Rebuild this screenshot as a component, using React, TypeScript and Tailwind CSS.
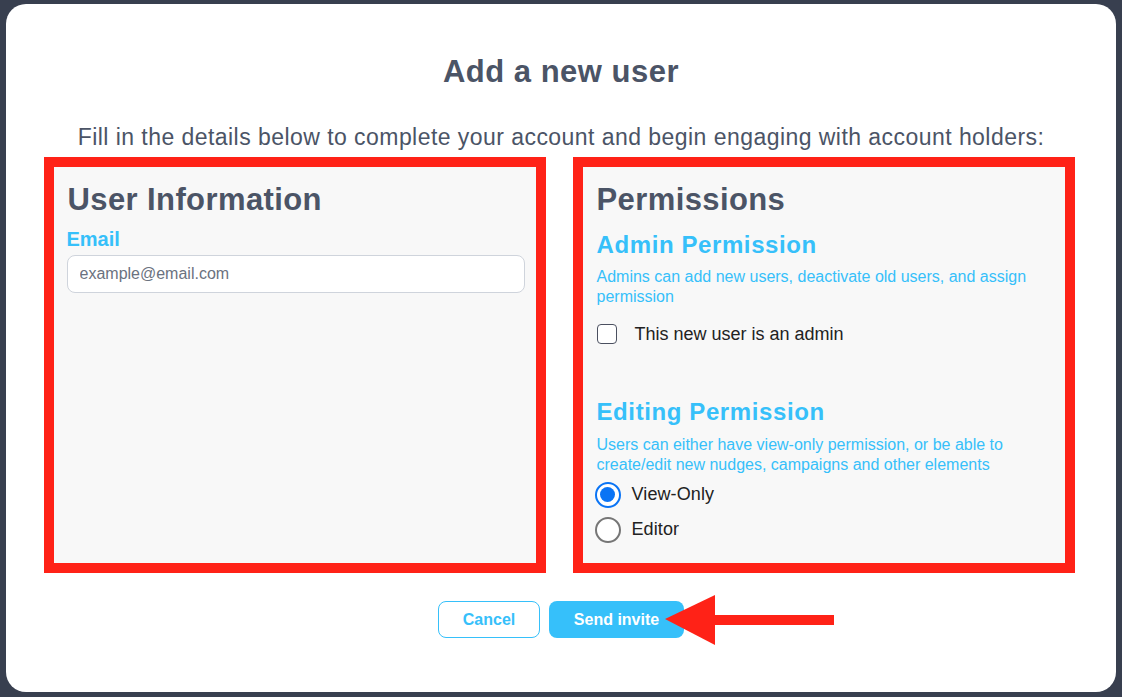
import { useState } from 'react'

const font = { fontFamily: '"Liberation Sans", Arial, sans-serif' }

function Radio({ checked, label, onChange }: { checked: boolean; label: string; onChange: () => void }) {
  return (
    <label className="flex h-[35px] items-center cursor-pointer" onClick={onChange}>
      <span
        className={
          checked
            ? 'flex h-[26px] w-[26px] items-center justify-center rounded-full border-[2.5px] border-[#0a74f5] bg-white'
            : 'flex h-[26px] w-[26px] items-center justify-center rounded-full border-2 border-[#767676] bg-white'
        }
      >
        {checked && <span className="h-[15px] w-[15px] rounded-full bg-[#0a74f5]" />}
      </span>
      <span className="ml-[11px] text-[18px] tracking-[0.1px] text-[#222]">{label}</span>
    </label>
  )
}

export default function App() {
  const [admin, setAdmin] = useState(false)
  const [role, setRole] = useState<'view' | 'edit'>('view')

  return (
    <div className="min-h-[697px] w-full bg-[#383f4f] pt-[4px] pb-[5px] px-[6px]" style={font}>
      <div className="relative flex h-[688px] flex-col items-center rounded-[20px] bg-white">
        <h1 className="mt-[51px] text-[31px] leading-[34px] tracking-[0.5px] font-bold text-[#4b5466]">Add a new user</h1>
        <p className="mt-[35px] text-[23px] leading-[26px] tracking-[0.45px] text-[#4b5466]">
          Fill in the details below to complete your account and begin engaging with account holders:
        </p>

        <div className="mt-[7px] flex gap-[27px] pr-[4px]">
          {/* user info */}
          <div className="h-[416px] w-[502px] border-[10px] border-[#ff2217] bg-[#f8f8f8] pl-[13px] pr-[11px] pt-[15px]">
            <h2 className="pl-[1px] text-[31px] leading-[36px] tracking-[0.4px] font-bold text-[#4b5466]">User Information</h2>
            <div className="mt-[9px] text-[20px] leading-[24px] font-bold text-[#36c0fa]">Email</div>
            <input
              className="mt-[4px] h-[38px] w-full rounded-[8px] border border-[#cfd4dc] bg-white px-[12px] text-[16px] text-[#333] placeholder:text-[#6b7280] outline-none"
              placeholder="example@email.com"
            />
          </div>

          {/* permissions */}
          <div className="h-[416px] w-[502px] border-[10px] border-[#ff2217] bg-[#f8f8f8] px-[14px] pt-[15px]">
            <h2 className="text-[31px] leading-[36px] tracking-[0.4px] font-bold text-[#4b5466]">Permissions</h2>
            <h3 className="mt-[13px] text-[24px] leading-[28px] tracking-[0.6px] font-bold text-[#36c0fa]">Admin Permission</h3>
            <p className="mt-[8px] text-[16px] leading-[20px] text-[#36c0fa]">
              Admins can add new users, deactivate old users, and assign permission
            </p>
            <label className="mt-[17px] flex items-center cursor-pointer" onClick={() => setAdmin(!admin)}>
              <span className="flex h-[20px] w-[20px] items-center justify-center rounded-[4px] border-[1.5px] border-[#4b5060] bg-white">
                {admin && (
                  <svg viewBox="0 0 16 16" className="h-[14px] w-[14px]">
                    <path d="M3 8.5l3 3 7-7" fill="none" stroke="#0a74f5" strokeWidth="2" />
                  </svg>
                )}
              </span>
              <span className="ml-[18px] text-[18px] leading-[20px] text-[#222]">This new user is an admin</span>
            </label>

            <h3 className="mt-[54px] text-[24px] leading-[28px] tracking-[0.6px] font-bold text-[#36c0fa]">Editing Permission</h3>
            <p className="mt-[9px] text-[16px] leading-[19.5px] text-[#36c0fa]">
              Users can either have view-only permission, or be able to create/edit new nudges, campaigns and other
              elements
            </p>
            <div className="mt-[3px] -ml-[2px]">
              <Radio checked={role === 'view'} label="View-Only" onChange={() => setRole('view')} />
              <Radio checked={role === 'edit'} label="Editor" onChange={() => setRole('edit')} />
            </div>
          </div>
        </div>

        <div className="mt-[28px] flex gap-[9px]">
          <button className="h-[37px] w-[102px] rounded-[8px] border border-[#36c0fa] bg-white text-[16px] font-bold text-[#36c0fa]">
            Cancel
          </button>
          <button className="h-[37px] w-[135px] rounded-[8px] bg-[#36c0fa] text-[16px] font-bold text-white">
            Send invite
          </button>
        </div>

        {/* pointer arrow */}
        <svg className="pointer-events-none absolute left-[654px] top-[587px]" width="184" height="62" viewBox="0 0 184 62">
          <polygon points="5,28 55,4 55,54" fill="#ff2217" />
          <rect x="53" y="24" width="121" height="10" fill="#ff2217" />
        </svg>
      </div>
    </div>
  )
}
